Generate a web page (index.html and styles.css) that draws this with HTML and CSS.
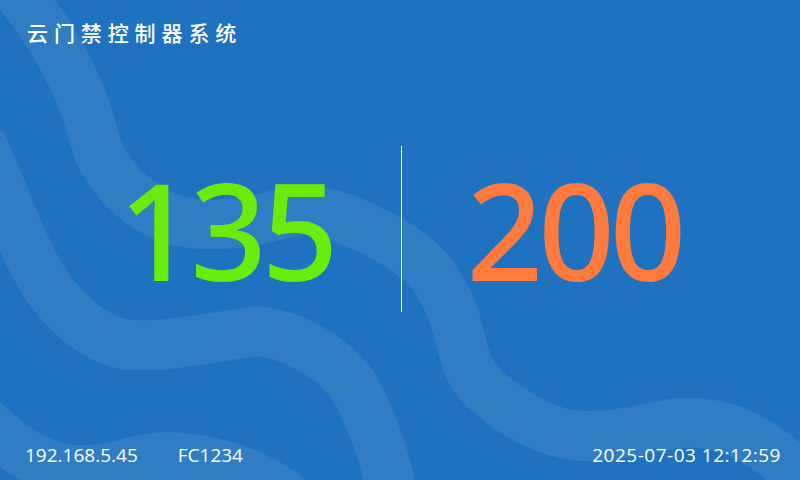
FILE: index.html
```html
<!DOCTYPE html>
<html lang="zh">
<head>
<meta charset="utf-8">
<link rel="stylesheet" href="styles.css">
</head>
<body>
<div class="screen">
  <svg class="waves" width="800" height="480" viewBox="0 0 800 480" aria-hidden="true">
    <path d="M 8 -20 C 50 30, 80 80, 95 140 C 105 180, 150 222, 200 224 S 275 214, 300 210 S 410 240, 436 280 S 458 345, 470 370 S 540 435, 583 436 S 650 425, 683 423 S 765 432, 815 495"/>
    <path d="M -20 142 C 0 180, 14 228, 36 268 C 58 308, 95 343, 133 345 S 220 336, 250 332 S 340 355, 361 400 S 388 470, 395 510"/>
    <path d="M -20 418 C 5 440, 35 468, 75 470 S 135 457, 167 457 S 255 467, 300 507"/>
  </svg>
  <header class="head">
    <h1 class="title">云门禁控制器系统</h1>
  </header>
  <main class="counts">
    <span class="num num-in">135</span>
    <span class="divider"></span>
    <span class="num num-total">200</span>
  </main>
  <footer class="foot">
    <div class="foot-left">
      <span class="ip">192.168.5.45</span>
      <span class="sn">FC1234</span>
    </div>
    <span class="time">2025-07-03 12:12:59</span>
  </footer>
</div>
</body>
</html>
```
FILE: styles.css
```css
html, body {
  margin: 0;
  padding: 0;
}
body {
  width: 800px;
  height: 480px;
  overflow: hidden;
}
.screen {
  position: relative;
  width: 800px;
  height: 480px;
  background: #1f72bf;
  overflow: hidden;
  display: flex;
  flex-direction: column;
  font-family: "Open Sans", "Noto Sans", "Noto Sans CJK SC", sans-serif;
  color: #ffffff;
}
.waves {
  position: absolute;
  left: 0;
  top: 0;
}
.waves path {
  fill: none;
  stroke: rgba(255, 255, 255, 0.08);
  stroke-width: 50;
}
.head {
  position: relative;
  height: 60px;
  padding: 17px 0 0 27px;
  box-sizing: border-box;
}
.title {
  margin: 0;
  font-family: "Noto Sans CJK SC", sans-serif;
  font-weight: 500;
  font-size: 21px;
  line-height: 30px;
  letter-spacing: 5.9px;
}
.counts {
  position: relative;
  flex: 1;
  display: flex;
  align-items: center;
  justify-content: center;
  padding-bottom: 32px;
}
.num {
  font-family: "Noto Sans", "Open Sans", sans-serif;
  font-size: 134px;
  line-height: 1;
  font-weight: 500;
  letter-spacing: -5px;
}
.num-in {
  color: #6aeb0b;
  margin-right: 67px;
}
.num-total {
  color: #ff7a3e;
  margin-left: 65px;
}
.divider {
  width: 1px;
  height: 166px;
  background: #ffffff;
}
.foot {
  position: relative;
  height: 50px;
  padding: 0 19px 0 25px;
  display: flex;
  justify-content: space-between;
  align-items: center;
  font-size: 19px;
  line-height: 24px;
}
.foot-left {
  display: flex;
  gap: 40px;
}
.time {
  letter-spacing: 0.5px;
}
```
